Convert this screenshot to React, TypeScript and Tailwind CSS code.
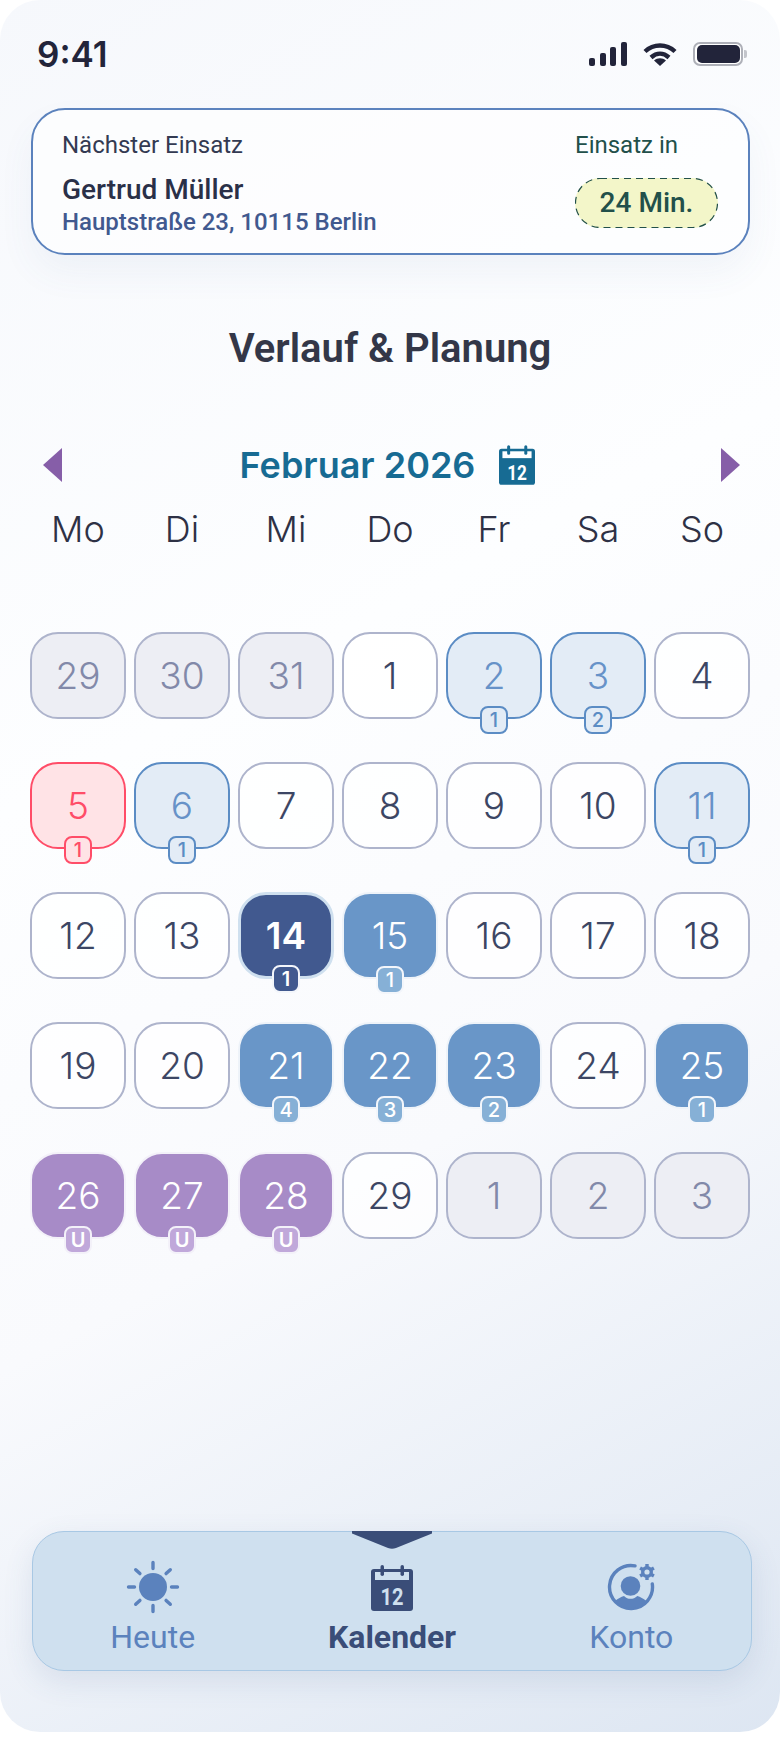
import { ReactNode } from "react";

type Kind = "plain" | "muted" | "light" | "alert" | "busy" | "today" | "off";

type Day = { n: number; kind: Kind; badge?: string };

const days: Day[] = [
  { n: 29, kind: "muted" },
  { n: 30, kind: "muted" },
  { n: 31, kind: "muted" },
  { n: 1, kind: "plain" },
  { n: 2, kind: "light", badge: "1" },
  { n: 3, kind: "light", badge: "2" },
  { n: 4, kind: "plain" },
  { n: 5, kind: "alert", badge: "1" },
  { n: 6, kind: "light", badge: "1" },
  { n: 7, kind: "plain" },
  { n: 8, kind: "plain" },
  { n: 9, kind: "plain" },
  { n: 10, kind: "plain" },
  { n: 11, kind: "light", badge: "1" },
  { n: 12, kind: "plain" },
  { n: 13, kind: "plain" },
  { n: 14, kind: "today", badge: "1" },
  { n: 15, kind: "busy", badge: "1" },
  { n: 16, kind: "plain" },
  { n: 17, kind: "plain" },
  { n: 18, kind: "plain" },
  { n: 19, kind: "plain" },
  { n: 20, kind: "plain" },
  { n: 21, kind: "busy", badge: "4" },
  { n: 22, kind: "busy", badge: "3" },
  { n: 23, kind: "busy", badge: "2" },
  { n: 24, kind: "plain" },
  { n: 25, kind: "busy", badge: "1" },
  { n: 26, kind: "off", badge: "U" },
  { n: 27, kind: "off", badge: "U" },
  { n: 28, kind: "off", badge: "U" },
  { n: 29, kind: "plain" },
  { n: 1, kind: "muted" },
  { n: 2, kind: "muted" },
  { n: 3, kind: "muted" },
];

const cellStyles: Record<Kind, string> = {
  plain: "bg-white/70 border-2 border-[#aeb4cc] text-[#3c4664] font-light",
  muted: "bg-[#edeef4] border-2 border-[#aeb4cc] text-[#8289a9] font-light",
  light: "bg-[#e3ecf6] border-2 border-[#5b8cc4] text-[#6792c8] font-light",
  alert: "bg-[#ffe3e6] border-2 border-[#ff4d68] text-[#ff4d68] font-light",
  busy: "bg-[#6996c8] border-2 border-[#eef3f9] text-white font-light",
  today: "bg-[#41598f] border-[3px] border-[#cfe0ef] text-white font-semibold",
  off: "bg-[#a78bc7] border-2 border-[#f3f1f9] text-white font-light",
};

const badgeStyles: Record<Kind, string> = {
  plain: "",
  muted: "",
  light: "bg-[#e3ecf6] border-[#5b8cc4] text-[#5b8cc4] font-medium",
  alert: "bg-[#ffe3e6] border-[#ff4d68] text-[#ff4d68] font-medium",
  busy: "bg-[#86b0d6] border-[#f3f6fb] text-white font-medium",
  today: "bg-[#41598f] border-[#f3f6fb] text-white font-semibold",
  off: "bg-[#c0a8da] border-[#f3f1f9] text-white font-semibold",
};

function CalendarIcon({ className, fill, ink }: { className: string; fill: string; ink: string }) {
  return (
    <svg viewBox="0 0 42 46" className={className}>
      <rect x="0" y="4" width="42" height="42" rx="3" fill={fill} />
      <rect x="4" y="7" width="34" height="8" fill={ink} />
      <rect x="9.500" y="0" width="3.500" height="11" rx="1.750" fill={fill} />
      <rect x="29.500" y="0" width="3.500" height="11" rx="1.750" fill={fill} />
      <text
        x="21"
        y="40"
        textAnchor="middle"
        fontSize="24"
        fontWeight="700"
        textLength="23"
        lengthAdjust="spacingAndGlyphs"
        fill={ink}
        className="font-['Roboto']"
      >
        12
      </text>
    </svg>
  );
}

function SunIcon() {
  return (
    <svg viewBox="0 0 54 54" className="h-[54px] w-[54px]" fill="none" stroke="#5b82bd" strokeWidth="3.400" strokeLinecap="round">
      <circle cx="27" cy="27" r="14" fill="#5b82bd" stroke="none" />
      <path d="M27 2.500v6M27 45.500v6M2.500 27h6M45.500 27h6M9.700 9.700l4.200 3.900M40.100 40.400l4.200 3.900M44.300 9.700l-4.200 3.900M13.900 40.400l-4.200 3.900" />
    </svg>
  );
}

function AccountIcon() {
  return (
    <svg viewBox="0 0 48 48" className="h-[48px] w-[48px]">
      <path d="M28 2.900A21.500 21.500 0 1 0 45.300 21" fill="none" stroke="#5b82bd" strokeWidth="3.400" strokeLinecap="round" />
      <circle cx="23.500" cy="23" r="9.800" fill="#5b82bd" />
      <path d="M8 38c3-2.500 6-4 9-5 2 2 4 2.800 6.500 2.800s4.700-.8 6.800-2.800c3 1 6 2.500 9 5A21.500 21.500 0 0 1 8 38z" fill="#5b82bd" />
      <circle cx="40" cy="9" r="4.300" fill="none" stroke="#5b82bd" strokeWidth="3.400" />
      <path d="M40 1v3M40 14v3M33.100 5l2.600 1.500M44.300 11.500l2.600 1.500M46.900 5l-2.600 1.500M35.700 11.500l-2.600 1.500" stroke="#5b82bd" strokeWidth="3.400" />
    </svg>
  );
}

function StatusIcons() {
  return (
    <div className="flex items-center">
      <div className="flex h-6 items-end gap-[4.700px]">
        <div className="h-2 w-[6px] rounded-[2px] bg-[#22243a]" />
        <div className="h-[13px] w-[6px] rounded-[2px] bg-[#22243a]" />
        <div className="h-[19px] w-[6px] rounded-[2px] bg-[#22243a]" />
        <div className="h-6 w-[6px] rounded-[2px] bg-[#22243a]" />
      </div>
      <svg viewBox="0 0 34 24" className="ml-4 h-6 w-[34px]" fill="none" stroke="#22243a" strokeWidth="4.400">
        <path d="M2 9.500C10.500 1.500 23.500 1.500 32 9.500" />
        <path d="M8 15.500c5.500-5 12.500-5 18 0" />
        <path d="M17 24l-6-5.500c3.500-3 8.500-3 12 0z" fill="#22243a" stroke="none" />
      </svg>
      <div className="ml-[16px] flex h-6 w-[50px] items-center justify-center rounded-[7px] border-2 border-[#aeb0b8] bg-white">
        <div className="h-[18px] w-[43px] rounded-[5px] bg-[#22243a]" />
      </div>
      <div className="ml-[1px] h-2 w-[3px] rounded-r-[2px] bg-[#c3c5cb]" />
    </div>
  );
}

function DayCell({ day }: { day: Day }) {
  return (
    <div
      className={`relative flex h-[87px] items-center justify-center rounded-[28px] font-['Inter'] text-[37px] leading-none ${cellStyles[day.kind]}`}
    >
      {day.n}
      {day.badge && (
        <span
          className={`absolute bottom-[-17px] left-1/2 flex h-[28px] w-[28px] -translate-x-1/2 items-center justify-center rounded-[8px] border-2 text-[20px] leading-none ${badgeStyles[day.kind]}`}
        >
          {day.badge}
        </span>
      )}
    </div>
  );
}

function Tab({ icon, label, active }: { icon: ReactNode; label: string; active?: boolean }) {
  return (
    <div className="flex flex-1 flex-col items-center">
      <div className="flex h-[54px] items-center justify-center">{icon}</div>
      <span className={`mt-[5px] text-[32px] leading-[36px] ${active ? "font-bold text-[#3a4d78]" : "text-[#5b82bd]"}`}>
        {label}
      </span>
    </div>
  );
}

export default function App() {
  return (
    <div className="h-[1744px] bg-white font-['Roboto',sans-serif]">
      <div className="flex h-[1732px] flex-col rounded-[40px] bg-[linear-gradient(152deg,#f6f8fc_0%,#fdfeff_38%,#f9fafd_64%,#dde6f2_100%)] pl-[30px] pr-[30px]">
        {/* status bar */}
        <div className="flex h-[108px] shrink-0 items-start justify-between pr-[3px] pt-[36px]">
          <span className="pl-[7px] font-['Inter'] text-[35px] font-semibold leading-[36px] text-[#22243a]">9:41</span>
          <div className="pt-[6px]">
            <StatusIcons />
          </div>
        </div>

        {/* next job card */}
        <div className="ml-[1px] flex h-[147px] shrink-0 items-start justify-between rounded-[34px] border-2 border-[#5b82bd] bg-white/60 pl-[29px] pr-[30px] pt-[20px] shadow-[0_18px_36px_rgba(70,100,150,0.06)]">
          <div>
            <div className="text-[24px] font-normal leading-[30px] text-[#333a52]">Nächster Einsatz</div>
            <div className="mt-[14px] text-[28px] font-medium leading-[32px] text-[#2a3048]">Gertrud Müller</div>
            <div className="mt-[1px] text-[24px] font-medium leading-[30px] text-[#41598f]">
              Hauptstraße 23, 10115 Berlin
            </div>
          </div>
          <div className="flex flex-col">
            <div className="text-[24px] font-normal leading-[30px] text-[#22504a]">Einsatz in</div>
            <div className="relative mt-[18px] flex h-[50px] w-[143px] items-center justify-center rounded-[25px] bg-[#f3f6c9] text-[28px] font-medium text-[#22504a]">
              24 Min.
              <svg viewBox="0 0 143 50" className="absolute inset-0 h-[50px] w-[143px]" fill="none">
                <rect x="0.500" y="0.500" width="142" height="49" rx="24.500" stroke="#22504a" strokeWidth="1.200" strokeDasharray="7 5" />
              </svg>
            </div>
          </div>
        </div>

        <h1 className="mt-[71px] text-center text-[40px] font-semibold leading-[46px] text-[#333748]">Verlauf &amp; Planung</h1>

        {/* month switcher */}
        <div className="mt-[73px] flex h-[40px] items-center justify-between pl-[13px] pr-[10px]">
          <svg viewBox="0 0 19 34" className="h-[34px] w-[19px]">
            <path d="M19 0v34L0 17z" fill="#865ea8" />
          </svg>
          <div className="mr-[8px] flex items-center gap-[24px]">
            <span className="font-['Inter'] text-[36px] font-semibold leading-[40px] text-[#176b93]">Februar 2026</span>
            <CalendarIcon className="h-[40px] w-[36px]" fill="#176b93" ink="#ffffff" />
          </div>
          <svg viewBox="0 0 19 34" className="h-[34px] w-[19px]">
            <path d="M0 0v34l19-17z" fill="#865ea8" />
          </svg>
        </div>

        <div className="mt-[24px] grid grid-cols-7 gap-x-2 text-center font-['Inter'] text-[36px] font-light leading-[40px] text-[#2e3145]">
          {["Mo", "Di", "Mi", "Do", "Fr", "Sa", "So"].map((d) => (
            <div key={d}>{d}</div>
          ))}
        </div>

        {/* month grid */}
        <div className="mt-[83px] grid grid-cols-7 gap-x-2 gap-y-[43px]">
          {days.map((day, i) => (
            <DayCell key={i} day={day} />
          ))}
        </div>

        {/* tab bar */}
        <div className="relative -mr-[2px] mb-[61px] ml-[2px] mt-auto flex h-[140px] shrink-0 items-start rounded-[32px] border border-[#a8c8e4] bg-[#cfe0ef] pt-[28px] shadow-[0_10px_30px_rgba(60,90,140,0.12)]">
          <svg viewBox="0 0 80 18" className="absolute left-[319px] top-[-1px] h-[18px] w-[80px]">
            <path d="M0 0h80v2.500L44 17q-4 1.500-8 0L0 2.500z" fill="#3a4d78" />
          </svg>
          <Tab icon={<SunIcon />} label="Heute" />
          <Tab
            icon={<CalendarIcon className="mt-[2px] h-[46px] w-[42px]" fill="#3a4d78" ink="#cfe0ef" />}
            label="Kalender"
            active
          />
          <Tab icon={<AccountIcon />} label="Konto" />
        </div>
      </div>
    </div>
  );
}
